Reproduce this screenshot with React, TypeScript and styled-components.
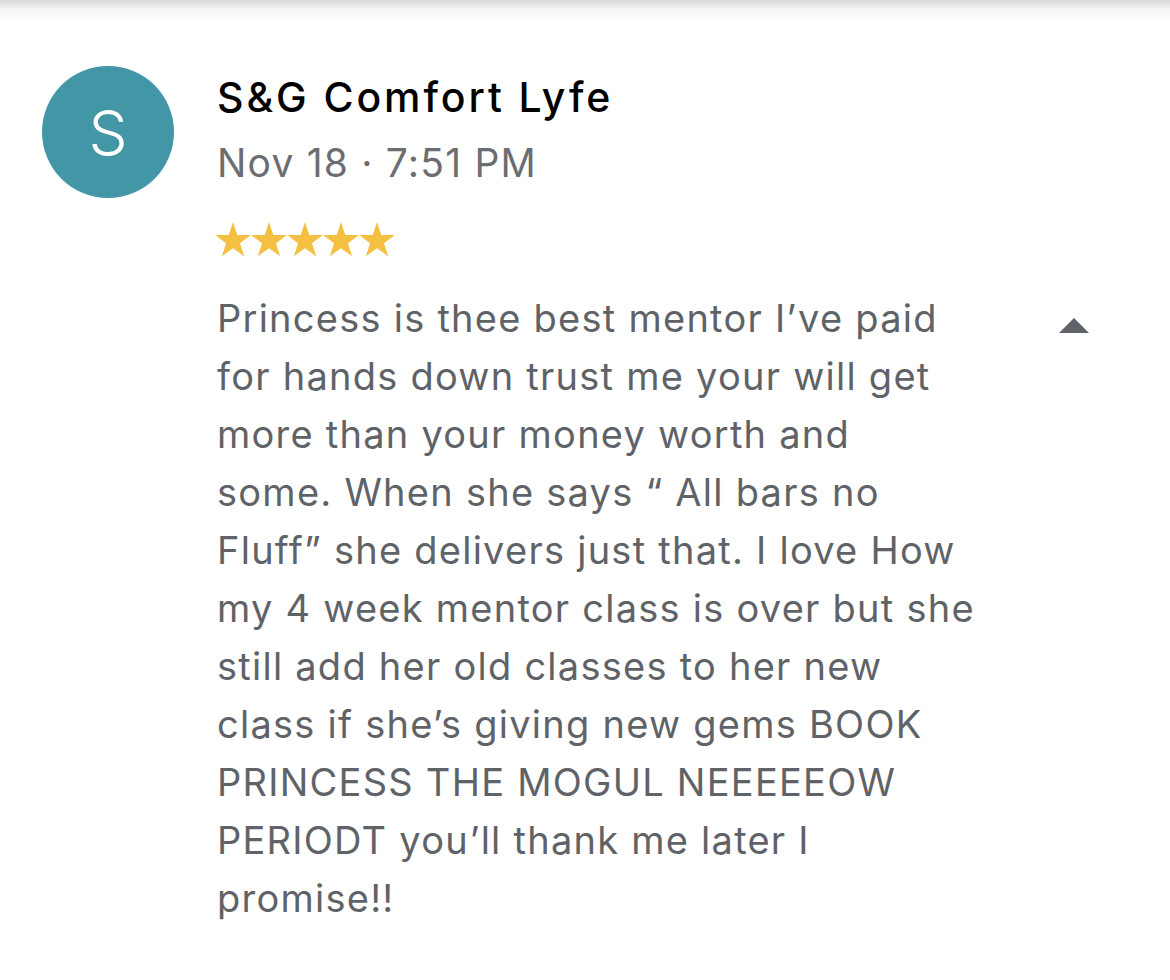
import React from "react";
import styled, { createGlobalStyle } from "styled-components";

const Global = createGlobalStyle`
  html, body { margin: 0; padding: 0; background: #fff; }
  body { font-family: Inter, Roboto, "Noto Sans", sans-serif; }
`;

const Page = styled.div`
  width: 1170px;
  height: 980px;
  background: #fff;
  position: relative;
  overflow: hidden;
`;

const TopShadow = styled.div`
  height: 24px;
  background: linear-gradient(to bottom, rgba(0,0,0,0.16), rgba(0,0,0,0.04) 40%, rgba(0,0,0,0));
`;

const Review = styled.div`
  display: flex;
  padding: 42px 0 0 42px;
`;

const Avatar = styled.div`
  width: 132px;
  height: 132px;
  border-radius: 50%;
  background: #4396a6;
  color: #fff;
  display: flex;
  align-items: center;
  justify-content: center;
  font-size: 62px;
  font-weight: 300;
  flex-shrink: 0;
`;

const Body = styled.div`
  margin-left: 43px;
  display: flex;
  flex-direction: column;
`;

const Name = styled.div`
  font-size: 41px;
  font-weight: 500;
  letter-spacing: 2.9px;
  color: #000;
  line-height: 62px;
`;

const DateLine = styled.div`
  font-size: 39px;
  letter-spacing: 1.2px;
  color: #6b6d71;
  line-height: 70px;
`;

const Stars = styled.div`
  display: flex;
  margin-top: 17px;
  margin-left: -2px;
  height: 48px;
  align-items: center;
`;

const TextRow = styled.div`
  display: flex;
  align-items: flex-start;
  margin-top: 26px;
`;

const Text = styled.div`
  font-size: 38px;
  letter-spacing: 1.25px;
  line-height: 58px;
  color: #5f6368;
  width: 820px;
  white-space: nowrap;
`;

const Caret = styled.svg`
  margin-left: 22px;
  margin-top: 29px;
`;

const starPoints = (() => {
  const pts: string[] = [];
  const cx = 18, cy = 18.9, R = 18.9, r = 7.3;
  for (let i = 0; i < 10; i++) {
    const rad = i % 2 === 0 ? R : r;
    const a = (Math.PI / 5) * i - Math.PI / 2;
    pts.push(`${(cx + rad * Math.cos(a)).toFixed(2)},${(cy + rad * Math.sin(a)).toFixed(2)}`);
  }
  return pts.join(" ");
})();

const Star = () => (
  <svg width="36" height="35" viewBox="0 0 36 35">
    <polygon points={starPoints} fill="#f4c042" />
  </svg>
);

const lines = [
  "Princess is thee best mentor I’ve paid",
  "for hands down trust me your will get",
  "more than your money worth and",
  "some. When she says “ All bars no",
  "Fluff” she delivers just that. I love How",
  "my 4 week mentor class is over but she",
  "still add her old classes to her new",
  "class if she’s giving new gems BOOK",
  "PRINCESS THE MOGUL NEEEEEOW",
  "PERIODT you’ll thank me later I",
  "promise!!",
];

export default function App() {
  return (
    <>
      <Global />
      <Page>
        <TopShadow />
        <Review>
          <Avatar>S</Avatar>
          <Body>
            <Name>S&amp;G Comfort Lyfe</Name>
            <DateLine>Nov 18 · 7:51 PM</DateLine>
            <Stars>
              {[0, 1, 2, 3, 4].map((i) => (
                <Star key={i} />
              ))}
            </Stars>
            <TextRow>
              <Text>
                {lines.map((l, i) => (
                  <React.Fragment key={i}>
                    {l}
                    {i < lines.length - 1 && <br />}
                  </React.Fragment>
                ))}
              </Text>
              <Caret width="30" height="15" viewBox="0 0 30 15">
                <path d="M0 15L15 0L30 15z" fill="#5f6368" />
              </Caret>
            </TextRow>
          </Body>
        </Review>
      </Page>
    </>
  );
}
